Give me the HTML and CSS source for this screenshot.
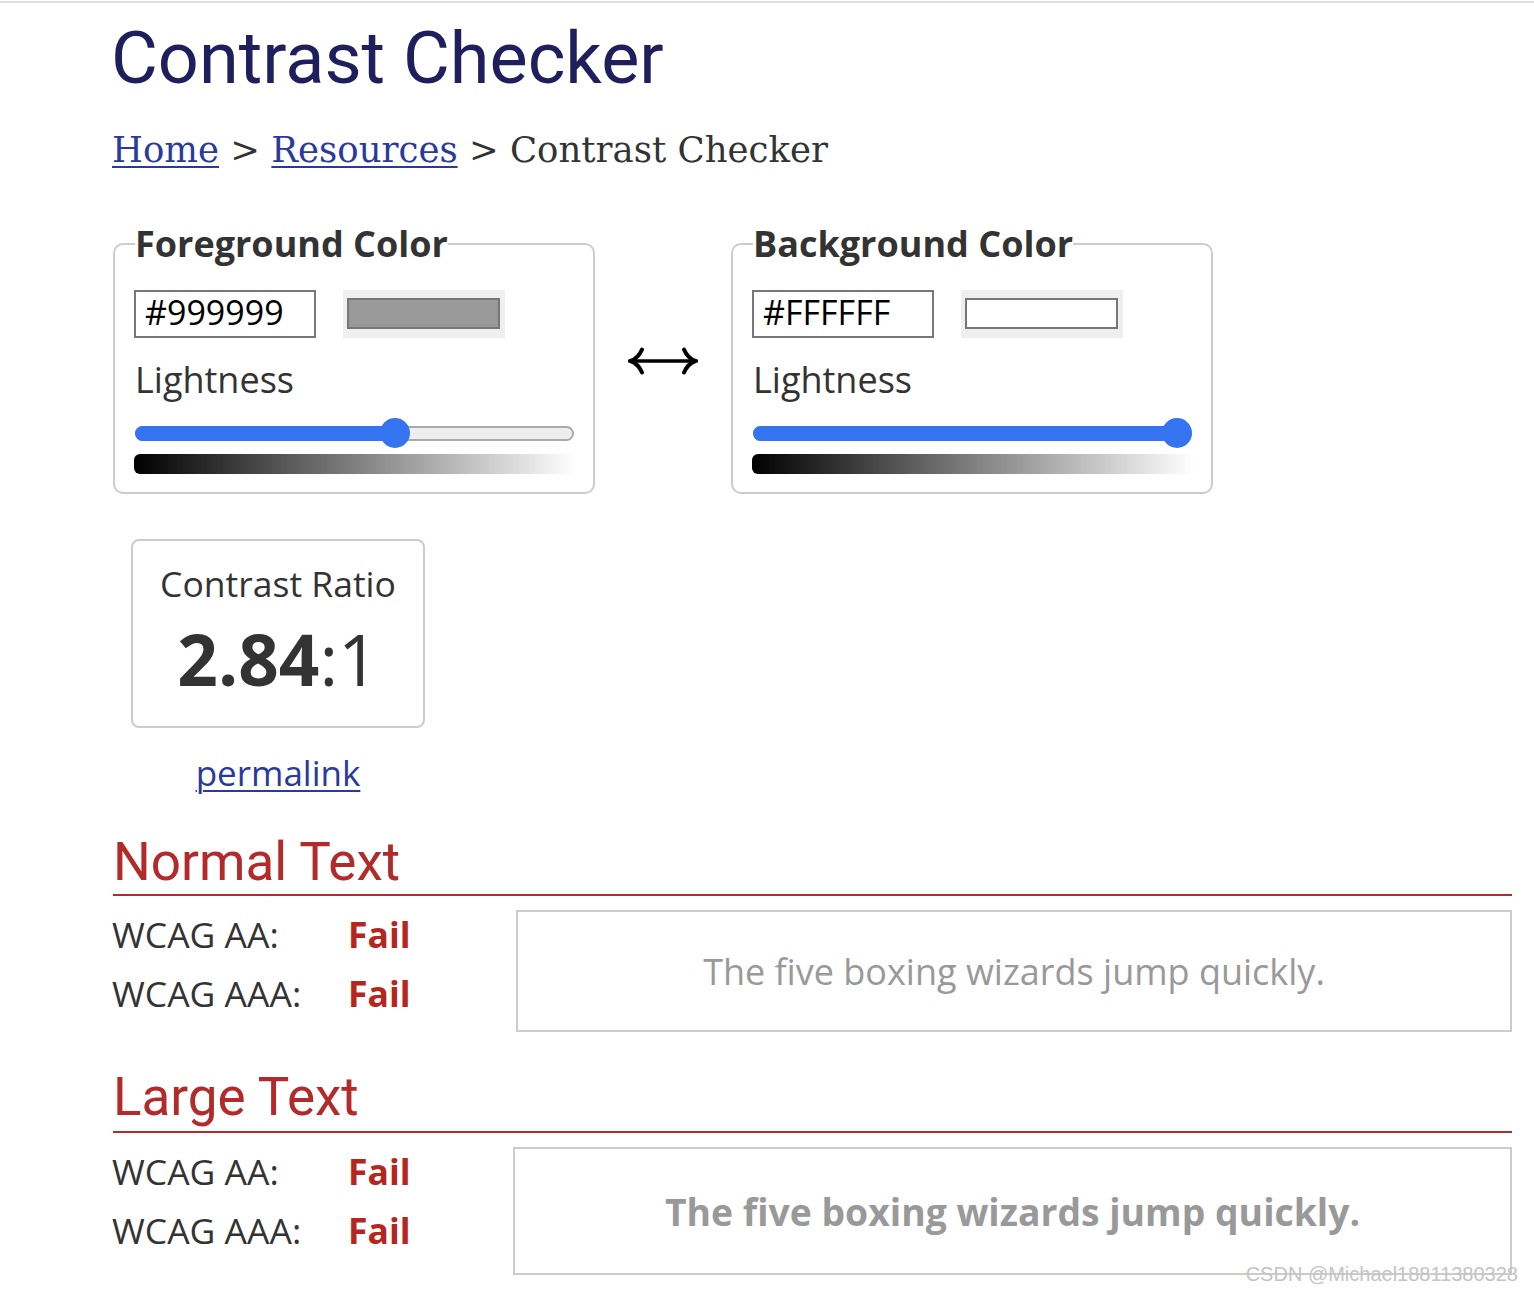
FILE: index.html
```html
<!DOCTYPE html>
<html lang="en">
<head>
<meta charset="utf-8">
<title>Contrast Checker</title>
<link rel="stylesheet" href="styles.css">
</head>
<body>
<div class="topline"></div>
<main class="page">
  <h1 class="title">Contrast Checker</h1>
  <nav class="crumbs"><a href="#">Home</a> &gt; <a href="#">Resources</a> &gt; Contrast Checker</nav>

  <div class="pickers">
    <fieldset class="picker">
      <legend>Foreground Color</legend>
      <div class="hexrow">
        <input class="hex" type="text" value="#999999">
        <div class="swatch-wrap"><div class="swatch swatch-fg"></div></div>
      </div>
      <div class="label">Lightness</div>
      <div class="slider" style="--v:0.6">
        <div class="track"><div class="fill"></div></div>
        <div class="thumb"></div>
      </div>
      <div class="gradient"></div>
    </fieldset>

    <div class="swap">
      <svg width="70" height="30" viewBox="0 0 70 30" aria-hidden="true">
        <path d="M5 15 H65" stroke="#000" stroke-width="3.6" fill="none"/>
        <path d="M14 3.5 C11.5 9.5 8 13 2.5 15 C8 17 11.5 20.5 14 26.5" stroke="#000" stroke-width="4" fill="none" stroke-linecap="round" stroke-linejoin="miter"/>
        <path d="M56 3.5 C58.5 9.5 62 13 67.5 15 C62 17 58.5 20.5 56 26.5" stroke="#000" stroke-width="4" fill="none" stroke-linecap="round" stroke-linejoin="miter"/>
      </svg>
    </div>

    <fieldset class="picker">
      <legend>Background Color</legend>
      <div class="hexrow">
        <input class="hex" type="text" value="#FFFFFF">
        <div class="swatch-wrap"><div class="swatch swatch-bg"></div></div>
      </div>
      <div class="label">Lightness</div>
      <div class="slider" style="--v:1">
        <div class="track"><div class="fill"></div></div>
        <div class="thumb"></div>
      </div>
      <div class="gradient"></div>
    </fieldset>
  </div>

  <div class="ratio-col">
    <div class="ratio-box">
      <div class="ratio-label">Contrast Ratio</div>
      <div class="ratio-value"><b>2.84</b>:1</div>
    </div>
    <a class="permalink" href="#">permalink</a>
  </div>

  <section class="result">
    <h2 class="result-title">Normal Text</h2>
    <div class="result-body">
      <div class="grades">
        <div class="grade"><span class="grade-name">WCAG AA:</span><span class="fail">Fail</span></div>
        <div class="grade"><span class="grade-name">WCAG AAA:</span><span class="fail">Fail</span></div>
      </div>
      <div class="preview preview-normal">The five boxing wizards jump quickly.</div>
    </div>
  </section>

  <section class="result result-large">
    <h2 class="result-title">Large Text</h2>
    <div class="result-body">
      <div class="grades">
        <div class="grade"><span class="grade-name">WCAG AA:</span><span class="fail">Fail</span></div>
        <div class="grade"><span class="grade-name">WCAG AAA:</span><span class="fail">Fail</span></div>
      </div>
      <div class="preview preview-large">The five boxing wizards jump quickly.</div>
    </div>
  </section>
</main>
<div class="watermark">CSDN @Michael18811380328</div>
</body>
</html>
```

FILE: styles.css
```css
* { box-sizing: border-box; }

html, body {
  margin: 0;
  padding: 0;
  background: #fff;
}

body {
  font-family: "Open Sans", "DejaVu Sans", sans-serif;
  color: #333;
  position: relative;
  min-height: 1292px;
}

.topline {
  margin-top: 1px;
  height: 2px;
  background: #dddddd;
}

.page {
  padding: 0 22px 0 113px;
}

.title {
  font-family: Roboto, "Liberation Sans", sans-serif;
  font-weight: 400;
  font-size: 72px;
  line-height: 72px;
  color: #1e1f5c;
  margin: 20px 0 0 -2px;
}

.crumbs {
  font-family: "DejaVu Serif", "Liberation Serif", serif;
  font-size: 35.5px;
  line-height: 36px;
  color: #333;
  margin-top: 37px;
  margin-left: -1px;
}

.crumbs a {
  color: #2a3a9c;
  text-decoration: underline;
  text-decoration-thickness: 2px;
  text-underline-offset: 4px;
}

.pickers {
  display: flex;
  align-items: center;
  margin-top: 56px;
}

.picker {
  width: 482px;
  margin: 0;
  padding: 26px 19px 18px 20px;
  border: 2px solid #cccccc;
  border-radius: 10px;
  min-width: 0;
}

.picker legend {
  padding: 0;
  font-weight: 700;
  font-size: 36px;
  line-height: 40px;
  color: #333;
}

.swap {
  width: 136px;
  display: flex;
  justify-content: center;
  padding-top: 4px;
}

.hexrow {
  display: flex;
  gap: 27px;
  margin-left: -1px;
}

.hex {
  width: 182px;
  height: 48px;
  margin: 0;
  border: 2px solid #777;
  border-radius: 0;
  padding: 0 9px 5px 9px;
  font-family: "Open Sans", sans-serif;
  font-size: 34px;
  color: #000;
  background: #fff;
  outline: none;
}

.swatch-wrap {
  width: 162px;
  height: 48px;
  background: #efefef;
  padding: 8px 5px 9px 4px;
}

.swatch {
  width: 100%;
  height: 100%;
  border: 2px solid #777;
}

.swatch-fg { background: #999999; }
.swatch-bg { background: #ffffff; }

.label {
  font-size: 36px;
  line-height: 50px;
  margin-top: 17px;
  color: #333;
}

.slider {
  position: relative;
  height: 30px;
  margin-top: 13px;
  display: flex;
  align-items: center;
}

.track {
  position: relative;
  width: 100%;
  height: 15px;
  background: #eeeeee;
  border: 2px solid #aaaaaa;
  border-radius: 8px;
}

.fill {
  position: absolute;
  left: -2px;
  top: -2px;
  bottom: -2px;
  width: calc((100% - 26px) * var(--v) + 17px);
  background: #3574f0;
  border-radius: 8px;
}

.thumb {
  position: absolute;
  top: 0;
  left: calc((100% - 30px) * var(--v));
  width: 30px;
  height: 30px;
  border-radius: 50%;
  background: #3574f0;
}

.gradient {
  height: 20px;
  margin-top: 6px;
  margin-left: -1px;
  margin-right: -2px;
  border-radius: 6px 0 0 6px;
  background: linear-gradient(to right, #000 0%, #fff 100%);
}

.ratio-col {
  width: 294px;
  margin-left: 18px;
  margin-top: 45px;
  display: flex;
  flex-direction: column;
  align-items: center;
}

.ratio-box {
  width: 294px;
  height: 189px;
  border: 2px solid #cccccc;
  border-radius: 8px;
  padding-top: 17px;
  text-align: center;
}

.ratio-label {
  font-size: 35.5px;
  line-height: 50px;
}

.ratio-value {
  font-size: 71px;
  line-height: 72px;
  margin-top: 15px;
  color: #333;
}

.ratio-value b {
  font-weight: 700;
}

.permalink {
  font-size: 35px;
  line-height: 50px;
  margin-top: 20px;
  color: #2a3a9c;
  text-decoration: underline;
  text-decoration-thickness: 2px;
  text-underline-offset: 4px;
}

.result {
  margin-top: 38px;
}

.result-large {
  margin-top: 39px;
}

.result-title {
  font-family: Roboto, "Liberation Sans", sans-serif;
  font-weight: 400;
  font-size: 53px;
  line-height: 53px;
  color: #b22a2a;
  margin: 0;
  padding-bottom: 5px;
  border-bottom: 2px solid #b22a2a;
}

.result-large .result-title {
  padding-bottom: 7px;
}

.result-body {
  display: flex;
  align-items: flex-start;
  margin-top: 14px;
}

.grades {
  width: 404px;
  flex: none;
  margin-top: -5px;
  margin-left: -1px;
}

.grade {
  display: flex;
  font-size: 35.5px;
  line-height: 59px;
}

.grade-name {
  width: 236px;
  flex: none;
  color: #333;
}

.fail {
  font-weight: 700;
  color: #b5261e;
}

.preview {
  flex: 1;
  border: 2px solid #cccccc;
  display: flex;
  align-items: center;
  justify-content: center;
  color: #999999;
}

.preview-normal {
  height: 122px;
  font-size: 36px;
}

.preview-large {
  height: 128px;
  font-size: 37.3px;
  font-weight: 700;
  margin-left: -3px;
}

.watermark {
  position: absolute;
  right: 16px;
  top: 1262px;
  font-family: "Liberation Sans", Arial, sans-serif;
  font-size: 20px;
  line-height: 24px;
  color: #c4c4c4;
}
```
